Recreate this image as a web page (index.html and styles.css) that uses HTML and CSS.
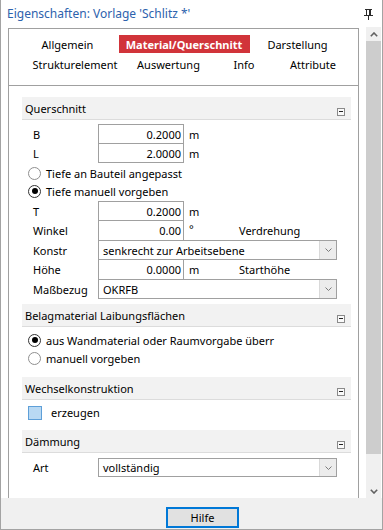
FILE: index.html
```html
<!DOCTYPE html>
<html lang="de">
<head>
<meta charset="utf-8">
<title>Eigenschaften</title>
<link rel="stylesheet" href="styles.css">
</head>
<body>
<div class="window">
  <div class="titlebar">
    <span class="title">Eigenschaften: Vorlage 'Schlitz *'</span>
    <svg class="pin" width="9" height="11" viewBox="0 0 9 11"><path d="M1 0.5H8M2.5 0.5V6M6.5 0.5V6M0 6.5H9M4.5 6.5V11" stroke="#2b2b2b" fill="none"/><path d="M5.5 1V6" stroke="#2b2b2b"/></svg>
  </div>
  <div class="main">
    <div class="panel">
      <div class="tabs">
        <div class="tabrow row1">
          <span class="tab">Allgemein</span>
          <span class="tab"><span class="active">Material/Querschnitt</span></span>
          <span class="tab">Darstellung</span>
        </div>
        <div class="tabrow row2">
          <span class="tab">Strukturelement</span>
          <span class="tab">Auswertung</span>
          <span class="tab">Info</span>
          <span class="tab">Attribute</span>
        </div>
      </div>
      <div class="content">
        <section class="group">
          <div class="ghead"><span>Querschnitt</span><span class="collapse"></span></div>
          <div class="gbody pb5">
            <div class="frow"><span class="lbl">B</span><span class="field">0.2000</span><span class="unit">m</span></div>
            <div class="frow"><span class="lbl">L</span><span class="field">2.0000</span><span class="unit">m</span></div>
            <div class="rrow first"><span class="radio"></span><span>Tiefe an Bauteil angepasst</span></div>
            <div class="rrow"><span class="radio on"></span><span>Tiefe manuell vorgeben</span></div>
            <div class="frow gap1"><span class="lbl">T</span><span class="field">0.2000</span><span class="unit">m</span></div>
            <div class="frow tall"><span class="lbl">Winkel</span><span class="field">0.00</span><span class="unit deg">°</span><span class="note">Verdrehung</span></div>
            <div class="frow"><span class="lbl">Konstr</span><span class="select"><span class="stext">senkrecht zur Arbeitsebene</span><span class="sbtn"><svg width="7" height="4" viewBox="0 0 7 4"><path d="M0.5 0.5L3.5 3.5L6.5 0.5" stroke="#7a7a7a" fill="none"/></svg></span></span></div>
            <div class="frow tall"><span class="lbl">Höhe</span><span class="field">0.0000</span><span class="unit">m</span><span class="note">Starthöhe</span></div>
            <div class="frow"><span class="lbl">Maßbezug</span><span class="select"><span class="stext">OKRFB</span><span class="sbtn"><svg width="7" height="4" viewBox="0 0 7 4"><path d="M0.5 0.5L3.5 3.5L6.5 0.5" stroke="#7a7a7a" fill="none"/></svg></span></span></div>
          </div>
        </section>
        <section class="group">
          <div class="ghead"><span>Belagmaterial Laibungsflächen</span><span class="collapse"></span></div>
          <div class="gbody pt4 pb10">
            <div class="rrow"><span class="radio on"></span><span>aus Wandmaterial oder Raumvorgabe überr</span></div>
            <div class="rrow"><span class="radio"></span><span>manuell vorgeben</span></div>
          </div>
        </section>
        <section class="group">
          <div class="ghead"><span>Wechselkonstruktion</span><span class="collapse"></span></div>
          <div class="gbody pt4 pb9">
            <div class="crow"><span class="check"></span><span>erzeugen</span></div>
          </div>
        </section>
        <section class="group">
          <div class="ghead"><span>Dämmung</span><span class="collapse"></span></div>
          <div class="gbody pt5">
            <div class="frow short"><span class="lbl">Art</span><span class="select"><span class="stext">vollständig</span><span class="sbtn"><svg width="7" height="4" viewBox="0 0 7 4"><path d="M0.5 0.5L3.5 3.5L6.5 0.5" stroke="#7a7a7a" fill="none"/></svg></span></span></div>
          </div>
        </section>
      </div>
    </div>
    <div class="scroll">
      <span class="sarrow"><svg width="8" height="5" viewBox="0 0 8 5"><path d="M0.8 4.2L4 1L7.2 4.2" stroke="#606060" stroke-width="1.6" fill="none"/></svg></span>
      <span class="thumb"></span>
      <span class="sarrow down"><svg width="8" height="5" viewBox="0 0 8 5"><path d="M0.8 0.8L4 4L7.2 0.8" stroke="#606060" stroke-width="1.6" fill="none"/></svg></span>
    </div>
  </div>
  <div class="footer">
    <button class="btn">Hilfe</button>
  </div>
</div>
</body>
</html>
```
FILE: styles.css
```css
* { box-sizing: border-box; margin: 0; padding: 0; }
html, body { width: 383px; height: 530px; overflow: hidden; background: #fff; }
body { font-family: "Noto Sans", sans-serif; font-size: 11px; color: #000; line-height: 1; }

.window {
  width: 383px; height: 530px;
  border: 1px solid #a3a3a3; border-top: none;
  display: flex; flex-direction: column; background: #fff;
}
.titlebar { height: 27px; flex: none; display: flex; align-items: center; padding-left: 6px; }
.title { flex: 1; color: #2d62ad; font-size: 12px; }
.pin { margin-right: 9px; margin-top: 1px; }

.main { height: 471px; flex: none; display: flex; }
.panel {
  width: 351px; height: 470px; margin: 1px 7px 0 7px;
  border: 1px solid #a0a0a0; border-bottom: none;
  display: flex; flex-direction: column; overflow: hidden;
}
.tabs { height: 57px; flex: none; border-bottom: 1px solid #a0a0a0; padding-top: 6px; }
.tabrow { display: grid; }
.row1 { height: 18px; padding-left: 21px; grid-template-columns: 75px 158px 69px; }
.row2 { height: 20px; margin-top: 1px; padding-left: 15px; grid-template-columns: 102px 85px 66px 72px; }
.tab { display: flex; align-items: center; justify-content: center; white-space: nowrap; }
.active {
  width: 131px; height: 18px; background: #d1343a; color: #fff; font-weight: bold;
  display: flex; align-items: center; justify-content: center;
}

.content { padding: 11px 7px 0 13px; }
.ghead {
  height: 23px; background: #f2f2f2; border-bottom: 1px solid #dcdcdc;
  display: flex; justify-content: space-between; align-items: center;
  padding: 0 6px 0 3px;
}
.collapse {
  width: 8px; height: 8px; align-self: flex-end; margin-bottom: 3px;
  border: 1px solid #8a8a8a; background: #fafafa; position: relative;
}
.collapse::after {
  content: ""; position: absolute; left: 1px; right: 1px; top: 2px; height: 1px; background: #222;
}
.gbody { padding-top: 4px; }
.pt4 { padding-top: 4px; }
.pt5 { padding-top: 5px; }
.pb5 { padding-bottom: 5px; }
.pb9 { padding-bottom: 9px; }
.pb10 { padding-bottom: 10px; }

.frow { display: flex; align-items: stretch; height: 20px; }
.frow + .frow { margin-top: -1px; }
.frow.tall { height: 21px; }
.frow.short { height: 19px; }
.frow.gap1 { margin-top: 1px; }
.lbl { width: 76px; padding-left: 11px; display: flex; align-items: center; }
.field {
  width: 86px; border: 1px solid #a0a0a0; background: #fff;
  display: flex; align-items: center; justify-content: flex-end; padding-right: 2px;
}
.unit { width: 55px; padding-left: 5px; display: flex; align-items: center; }
.unit.deg { align-items: flex-start; padding-top: 3px; }
.note { display: flex; align-items: center; }
.select {
  width: 239px; border: 1px solid #a0a0a0; display: flex; background: #fff;
}
.stext { flex: 1; display: flex; align-items: center; padding-left: 4px; }
.sbtn {
  width: 17px; background: #ececec; border-left: 1px solid #d9d9d9;
  display: flex; align-items: center; justify-content: center;
}

.rrow { height: 18px; display: flex; align-items: center; padding-left: 6px; gap: 5px; }
.rrow.first { margin-top: 1px; }
.radio {
  width: 13px; height: 13px; border-radius: 50%; border: 1px solid #8f8f8f; background: #fff;
  display: flex; align-items: center; justify-content: center; flex: none;
}
.radio.on { border-color: #333; }
.radio.on::after { content: ""; width: 6px; height: 6px; border-radius: 50%; background: #000; }

.crow { height: 17px; display: flex; align-items: center; padding-left: 6px; gap: 9px; }
.check { width: 14px; height: 14px; background: #b9d9f3; border: 1px solid #5e9fd8; flex: none; }

.scroll {
  width: 15px; height: 471px; background: #f0f0f0; display: flex; flex-direction: column;
}
.sarrow { height: 14px; flex: none; display: flex; align-items: center; justify-content: center; }
.thumb { height: 413px; background: #cdcdcd; flex: none; }
.sarrow.down { margin-top: auto; }

.footer { height: 31px; flex: none; background: #f0f0f0; padding: 9px 0 0 165px; }
.btn {
  width: 73px; height: 21px; border: 2px solid #0078d7; background: #e1e1e1;
  font-family: "Noto Sans", sans-serif; font-size: 11px; font-weight: normal; color: #000;
}
```
